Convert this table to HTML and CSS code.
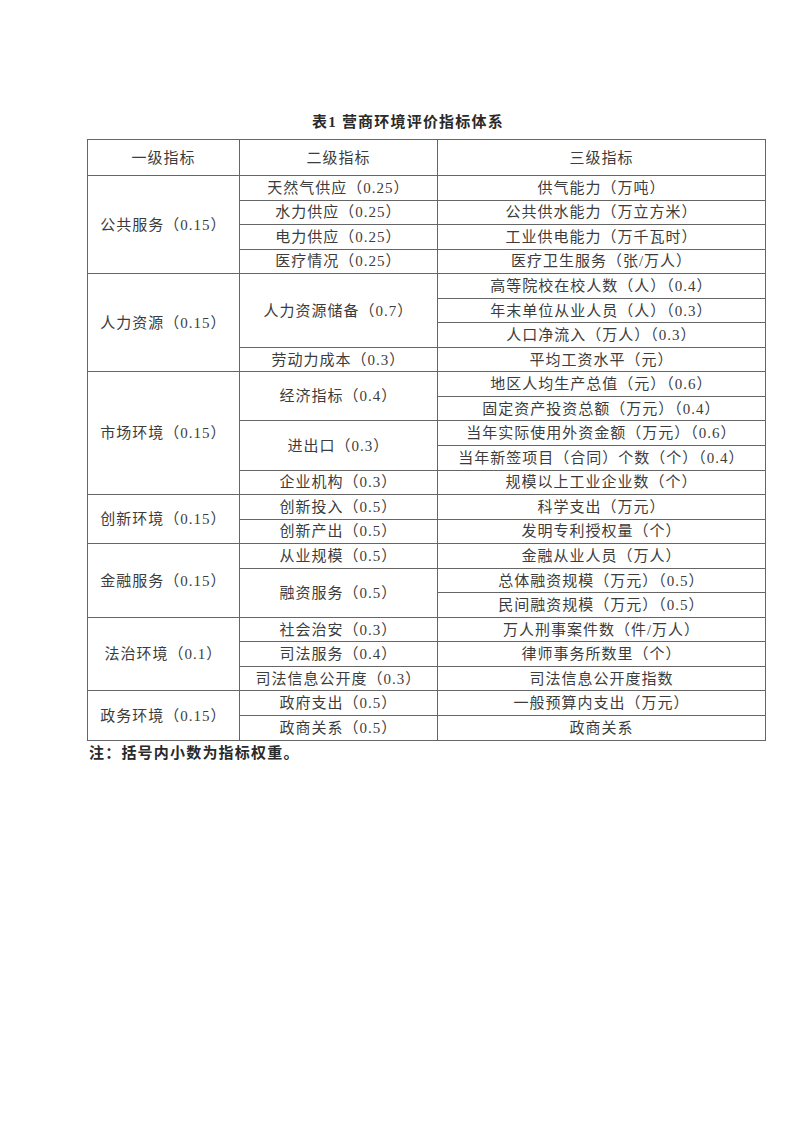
FILE: index.html
```html
<!DOCTYPE html>
<html lang="zh-CN">
<head>
<meta charset="utf-8">
<title>表1 营商环境评价指标体系</title>
<link rel="stylesheet" href="styles.css">
</head>
<body>
<div class="page">
  <div class="caption">表1 营商环境评价指标体系</div>
  <table class="grid">
    <colgroup>
      <col class="c1"><col class="c2"><col class="c3">
    </colgroup>
    <thead>
      <tr class="head"><th>一级指标</th><th>二级指标</th><th>三级指标</th></tr>
    </thead>
    <tbody>
      <tr><td rowspan="4">公共服务（0.15）</td><td>天然气供应（0.25）</td><td>供气能力（万吨）</td></tr>
      <tr><td>水力供应（0.25）</td><td>公共供水能力（万立方米）</td></tr>
      <tr><td>电力供应（0.25）</td><td>工业供电能力（万千瓦时）</td></tr>
      <tr><td>医疗情况（0.25）</td><td>医疗卫生服务（张/万人）</td></tr>

      <tr><td rowspan="4">人力资源（0.15）</td><td rowspan="3">人力资源储备（0.7）</td><td>高等院校在校人数（人）（0.4）</td></tr>
      <tr><td>年末单位从业人员（人）（0.3）</td></tr>
      <tr><td>人口净流入（万人）（0.3）</td></tr>
      <tr><td>劳动力成本（0.3）</td><td>平均工资水平（元）</td></tr>

      <tr><td rowspan="5">市场环境（0.15）</td><td rowspan="2">经济指标（0.4）</td><td>地区人均生产总值（元）（0.6）</td></tr>
      <tr><td>固定资产投资总额（万元）（0.4）</td></tr>
      <tr><td rowspan="2">进出口（0.3）</td><td>当年实际使用外资金额（万元）（0.6）</td></tr>
      <tr><td>当年新签项目（合同）个数（个）（0.4）</td></tr>
      <tr><td>企业机构（0.3）</td><td>规模以上工业企业数（个）</td></tr>

      <tr><td rowspan="2">创新环境（0.15）</td><td>创新投入（0.5）</td><td>科学支出（万元）</td></tr>
      <tr><td>创新产出（0.5）</td><td>发明专利授权量（个）</td></tr>

      <tr><td rowspan="3">金融服务（0.15）</td><td>从业规模（0.5）</td><td>金融从业人员（万人）</td></tr>
      <tr><td rowspan="2">融资服务（0.5）</td><td>总体融资规模（万元）（0.5）</td></tr>
      <tr><td>民间融资规模（万元）（0.5）</td></tr>

      <tr><td rowspan="3">法治环境（0.1）</td><td>社会治安（0.3）</td><td>万人刑事案件数（件/万人）</td></tr>
      <tr><td>司法服务（0.4）</td><td>律师事务所数里（个）</td></tr>
      <tr><td>司法信息公开度（0.3）</td><td>司法信息公开度指数</td></tr>

      <tr><td rowspan="2">政务环境（0.15）</td><td>政府支出（0.5）</td><td>一般预算内支出（万元）</td></tr>
      <tr><td>政商关系（0.5）</td><td>政商关系</td></tr>
    </tbody>
  </table>
  <div class="note">注：括号内小数为指标权重。</div>
</div>
</body>
</html>
```

FILE: styles.css
```css
html, body {
  margin: 0;
  padding: 0;
  background: #ffffff;
}

.page {
  padding: 112px 0 0 87px;
  width: 678px;
  font-family: "Liberation Serif", "Noto Sans CJK SC", serif;
  color: #3c3c3c;
}

.caption {
  text-align: center;
  font-weight: bold;
  font-size: 15px;
  letter-spacing: 1.2px;
  line-height: 20px;
  height: 27px;
  padding-right: 36px;
  color: #2a2a2a;
}

.grid {
  border-collapse: collapse;
  width: 678px;
  table-layout: fixed;
  font-size: 15px;
  letter-spacing: 1px;
}

.c1 { width: 152px; }
.c2 { width: 198px; }
.c3 { width: 328px; }

.grid th,
.grid td {
  border: 1px solid #666666;
  padding: 0;
  text-align: center;
  vertical-align: middle;
  font-weight: normal;
  line-height: 18px;
  white-space: nowrap;
}

.grid .head {
  height: 36px;
}

.grid tbody tr {
  height: 24.56px;
}

.note {
  margin-top: 2px;
  padding-left: 2px;
  font-weight: bold;
  font-size: 15px;
  letter-spacing: 1.2px;
  line-height: 20px;
  color: #2a2a2a;
}
```
